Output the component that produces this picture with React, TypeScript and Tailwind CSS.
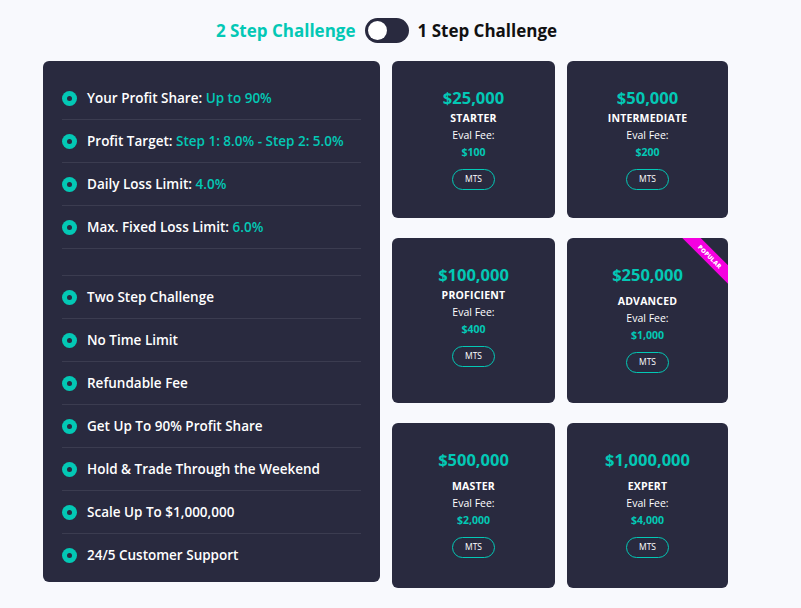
import React from "react";

const font = { fontFamily: '"Open Sans", "Liberation Sans", sans-serif' };

type Feature = { label: string; value?: string };

const topFeatures: Feature[] = [
  { label: "Your Profit Share:", value: "Up to 90%" },
  { label: "Profit Target:", value: "Step 1: 8.0% - Step 2: 5.0%" },
  { label: "Daily Loss Limit:", value: "4.0%" },
  { label: "Max. Fixed Loss Limit:", value: "6.0%" },
];

const bottomFeatures: Feature[] = [
  { label: "Two Step Challenge" },
  { label: "No Time Limit" },
  { label: "Refundable Fee" },
  { label: "Get Up To 90% Profit Share" },
  { label: "Hold & Trade Through the Weekend" },
  { label: "Scale Up To $1,000,000" },
  { label: "24/5 Customer Support" },
];

type Plan = { price: string; name: string; fee: string; wide?: boolean; popular?: boolean };

const plans: Plan[] = [
  { price: "$25,000", name: "STARTER", fee: "$100" },
  { price: "$50,000", name: "INTERMEDIATE", fee: "$200" },
  { price: "$100,000", name: "PROFICIENT", fee: "$400" },
  { price: "$250,000", name: "ADVANCED", fee: "$1,000", wide: true, popular: true },
  { price: "$500,000", name: "MASTER", fee: "$2,000", wide: true },
  { price: "$1,000,000", name: "EXPERT", fee: "$4,000", wide: true },
];

function Dot() {
  return (
    <span className="w-[15px] h-[15px] rounded-full bg-[#03c8b5] flex items-center justify-center shrink-0">
      <span className="w-[5px] h-[5px] rounded-full bg-[#292a3f]" />
    </span>
  );
}

function FeatureRow({ f, last }: { f: Feature; last?: boolean }) {
  return (
    <div className={`h-[43px] flex items-center gap-[10px] ${last ? "" : "border-b border-[#3b3c50]"}`}>
      <Dot />
      <p className="text-[13.5px] font-semibold text-white">
        {f.label} {f.value && <span className="text-[#03c8b5]">{f.value}</span>}
      </p>
    </div>
  );
}

function PlanCard({ plan, tall }: { plan: Plan; tall?: boolean }) {
  return (
    <div
      className={`relative overflow-hidden rounded-[6px] bg-[#292a3f] flex flex-col items-center pt-[27px] ${tall ? "h-[165px]" : "h-[157px]"}`}
    >
      {plan.popular && (
        <div className="absolute left-[103px] top-[12px] w-[80px] h-[13px] rotate-45 bg-[#f500e0] flex items-center justify-center">
          <span className="text-[6px] font-extrabold text-white leading-none tracking-[0.2px]">POPULAR</span>
        </div>
      )}
      <p className="text-[16.5px] leading-[20px] font-bold text-[#03c8b5]">{plan.price}</p>
      <p className={`text-[10.5px] leading-[14px] font-bold text-white tracking-[0.2px] ${plan.wide ? "mt-[9px]" : "mt-[3px]"}`}>
        {plan.name}
      </p>
      <p className="text-[10.5px] leading-[14px] text-white mt-[3px]">Eval Fee:</p>
      <p className="text-[10.5px] leading-[14px] font-bold text-[#03c8b5] mt-[3px]">{plan.fee}</p>
      <button className="mt-[10px] w-[43px] h-[21px] rounded-full border-[1.5px] border-[#03c8b5] text-[8.5px] text-white flex items-center justify-center">
        MTS
      </button>
    </div>
  );
}

export default function App() {
  return (
    <div className="w-[801px] h-[608px] bg-[#f8f9fd] overflow-hidden" style={font}>
      <div className="h-[25px] mt-[18px] flex items-center justify-center pr-[28px] gap-[9px]">
        <span className="text-[17px] leading-[25px] font-bold text-[#03c8b5]">2 Step Challenge</span>
        <div className="w-[44px] h-[25px] rounded-full bg-[#292a3f] flex items-center px-[3px]">
          <span className="w-[19px] h-[19px] rounded-full bg-white" />
        </div>
        <span className="text-[17px] leading-[25px] font-bold text-[#111]">1 Step Challenge</span>
      </div>

      <div className="flex items-start gap-[12px] pl-[43px] mt-[18px]">
        <div className="w-[337px] h-[521px] rounded-[6px] bg-[#292a3f] px-[19px] pt-[16px]">
          {topFeatures.map((f) => (
            <FeatureRow key={f.label} f={f} />
          ))}
          <div className="h-[27px] border-b border-[#3b3c50]" />
          {bottomFeatures.map((f, i) => (
            <FeatureRow key={f.label} f={f} last={i === bottomFeatures.length - 1} />
          ))}
        </div>

        <div className="grid grid-cols-[163px_161px] gap-x-[12px] gap-y-[20px]">
          {plans.map((p, i) => (
            <PlanCard key={p.name} plan={p} tall={i >= 2} />
          ))}
        </div>
      </div>
    </div>
  );
}
